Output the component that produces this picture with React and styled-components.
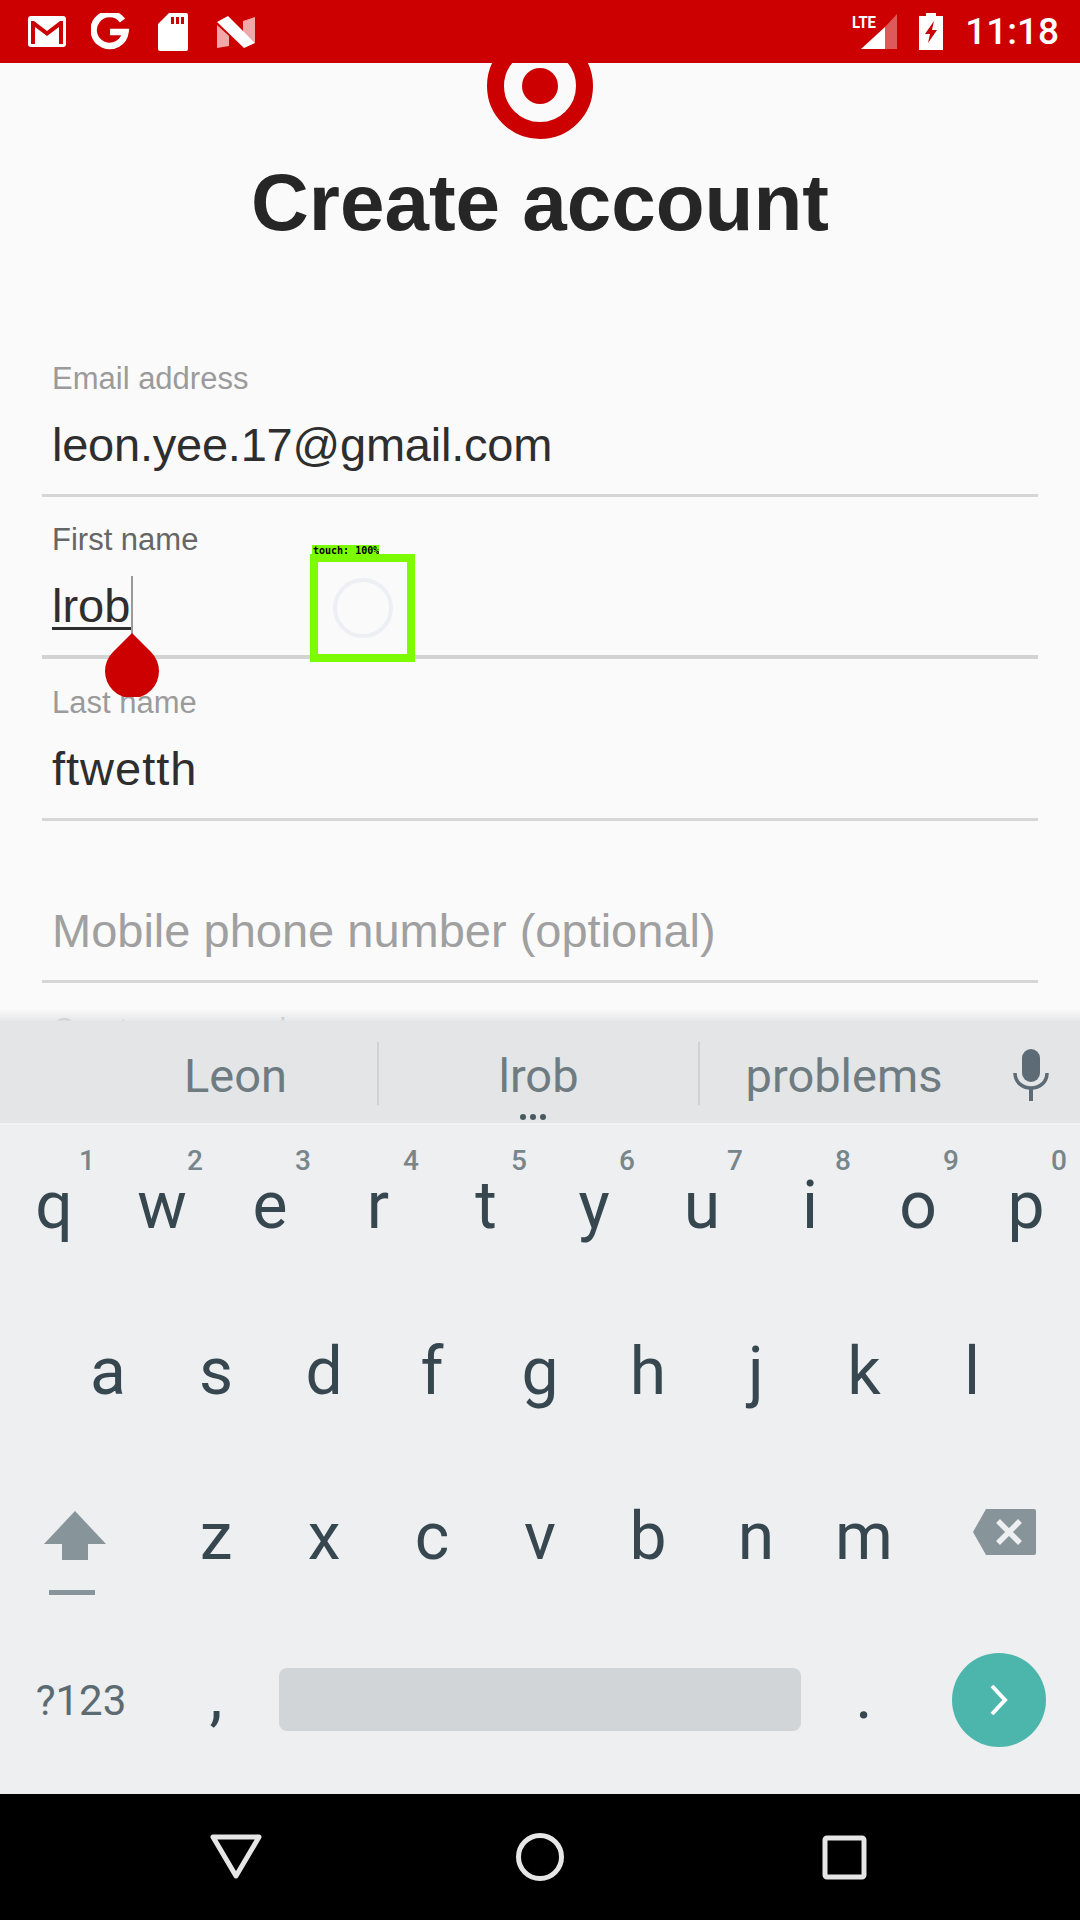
import React from "react";
import styled, { createGlobalStyle } from "styled-components";

const Global = createGlobalStyle`
  html, body { margin: 0; padding: 0; background: #fafafa; }
  #root { width: 1080px; height: 1920px; overflow: hidden; }
  * { box-sizing: border-box; }
`;
const Screen = styled.div`
  width: 1080px; height: 1920px; display: flex; flex-direction: column;
  font-family: "Liberation Sans", Arial, sans-serif;
`;
const StatusBar = styled.div`
  height: 63px; flex: none; background: #cc0000; display: flex; align-items: center;
  justify-content: space-between; padding: 0 21px 0 28px; position: relative; z-index: 2;
`;
const StatusGroup = styled.div`
  display: flex; align-items: center; gap: ${p => p.$gap || 25}px;
`;
const Clock = styled.span`
  font-family: Roboto, sans-serif; font-size: 37px; font-weight: 500; color: #fff;
`;
const Content = styled.div`
  height: 958px; flex: none; background: #fafafa; position: relative; overflow: hidden;
  display: flex; flex-direction: column; align-items: center;
  &::after {
    content: ""; position: absolute; left: 0; right: 0; bottom: 0; height: 12px;
    background: linear-gradient(to bottom, rgba(235,235,235,0), rgba(228,230,232,.9));
  }
`;
const Logo = styled.svg`
  width: 106px; height: 106px; margin-top: -30px; flex: none; display: block;
`;
const Title = styled.h1`
  margin: 20px 0 0; font-size: 80px; line-height: 88px; font-weight: 700; color: #262626;
`;
const Form = styled.div`
  width: 100%; padding: 0 42px; margin-top: 88px; display: flex; flex-direction: column;
`;
const Field = styled.div`
  height: 162px; flex: none; padding: 0 10px; border-bottom: ${p => p.$focus ? 4 : 3}px solid ${p => p.$focus ? "#d3d3d3" : "#d6d6d6"};
  display: flex; flex-direction: column; justify-content: flex-end;
`;
const Label = styled.div`
  font-size: 31px; line-height: 36px; color: ${p => p.$focus ? "#666" : "#9b9b9b"}; margin-bottom: ${p => p.$mb ?? 16}px;
`;
const Value = styled.div`
  font-size: 47px; line-height: 64px; color: #2e2e2e; height: 81px; display: flex; align-items: flex-start;
  letter-spacing: ${p => p.$track || 0}px;
`;
const Placeholder = styled(Value)`color: #a0a0a0;`;
const Composing = styled.span`
  border-bottom: 3px solid #2e2e2e; height: 56px; line-height: 64px; width: 80px; white-space: nowrap;
`;
const Cursor = styled.span`
  position: absolute; left: 131px; top: 513px; width: 2px; height: 60px; background: #9a9a9a;
`;
const Handle = styled.svg`
  position: absolute; left: 104px; top: 570px; width: 56px; height: 64px;
`;
const TouchBox = styled.div`
  position: absolute; left: 310px; top: 491px; width: 105px; height: 108px; border: 8px solid #7cfc00;
  display: flex; align-items: center; justify-content: center;
`;
const TouchTag = styled.div`
  position: absolute; left: -6px; top: -17px; height: 12px; width: 67px; background: #7cfc00;
  font-family: "DejaVu Sans Mono", monospace; font-size: 10px; line-height: 12px; font-weight: 700; color: #000; white-space: nowrap; padding-left: 1px; overflow: hidden;
`;
const TouchRing = styled.div`
  width: 60px; height: 60px; border-radius: 50%; border: 4px solid #eeeef5;
`;
const Keyboard = styled.div`
  height: 773px; flex: none; background: #edeff1; display: flex; flex-direction: column; font-family: Roboto, sans-serif;
`;
const Candidates = styled.div`
  height: 104px; flex: none; background: #e3e5e7; border-bottom: 2px solid #f0f2f3; position: relative; padding-top: 3px;
  display: grid; grid-template-columns: 379px 321px 288px 92px; align-items: center;
`;
const Candidate = styled.div`
  font-size: 47px; color: #6e7b81; text-align: center; padding-left: ${p => p.$pl || 0}px; height: 63px; line-height: 68px;
  border-right: ${p => p.$div ? "2px solid #cfd3d6" : "0"};
`;
const MicCell = styled.div`display: flex; justify-content: flex-start; padding-left: 25px; padding-top: 3px;`;
const Dots = styled.div`
  position: absolute; left: 520px; top: 93px; display: flex; gap: 4px;
`;
const Dot = styled.i`width: 6px; height: 6px; border-radius: 50%; background: #4a5960;`;
const KeyRow = styled.div`
  height: ${p => p.$h || 165}px; flex: none; display: grid; grid-template-columns: ${p => p.$cols};
  padding: ${p => p.$pad || "0"};
`;
const Key = styled.div`
  position: relative; display: flex; justify-content: center; align-items: flex-start;
  padding-top: ${p => p.$pt || 46}px; font-size: 66px; line-height: 70px; color: #37474f;
`;
const Hint = styled.span`
  position: absolute; left: 79px; top: 20px; font-size: 28px; line-height: 32px; font-weight: 500; color: #78868c;
`;
const SideKey = styled.div`
  display: flex; justify-content: ${p => p.$justify || "center"}; align-items: flex-start; padding: ${p => p.$pad || "0"};
  font-size: ${p => p.$fs || 42}px; line-height: 50px; color: #5c6b72;
`;
const Space = styled.div`
  height: 63px; margin: 47px 9px 0; border-radius: 8px; background: #d1d5d8;
`;
const Enter = styled.div`
  width: 94px; height: 94px; border-radius: 50%; background: #4db6ac; margin: 32px 0 0 34px;
  display: flex; align-items: center; justify-content: center;
`;
const NavBar = styled.div`
  height: 126px; flex: none; background: #000; display: grid; grid-template-columns: repeat(3, 1fr); padding: 0 84px; align-items: center; justify-items: center;
`;

const row1 = "qwertyuiop".split("");
const row2 = "asdfghjkl".split("");
const row3 = "zxcvbnm".split("");

function Gmail() {
  return <svg width="38" height="31" viewBox="0 0 38 31"><rect width="38" height="31" rx="3" fill="#fff"/><path d="M3 5v23h4V11l12 9 12-9v17h4V5h-3L19 15 6 5z" fill="#c00"/></svg>;
}
function GLogo() {
  return <svg width="42" height="38" viewBox="0 0 42 38"><path d="M31.5 7.5A16 16 0 1 0 34.5 19H19" fill="none" stroke="#fff" strokeWidth="6.5"/></svg>;
}
function Sd() {
  return <svg width="34" height="38" viewBox="0 0 34 38"><path d="M11 0h17a2 2 0 0 1 2 2v34a2 2 0 0 1-2 2H2a2 2 0 0 1-2-2V11z" fill="#fff"/><path d="M13 4h3v7h-3zM18 4h3v7h-3zM23 4h3v7h-3z" fill="#c00"/></svg>;
}
function NLogo() {
  return <svg width="38" height="32" viewBox="0 0 38 32"><path d="M0 9l12 11v10L0 32z" fill="#f0a8a8"/><path d="M38 1L26 5v11l12 11z" fill="#f0a8a8"/><path d="M0 6L11 0l27 27-11 5z" fill="#fff"/></svg>;
}
function Signal() {
  return <svg width="45" height="37" viewBox="0 0 45 37"><text x="0" y="15" fontFamily="Roboto" fontSize="17" fontWeight="700" fill="#fff" textLength="24" lengthAdjust="spacingAndGlyphs">LTE</text><path d="M9 36l24-22v22z" fill="#fff"/><path d="M33 14L45 1v35H33z" fill="#fff" opacity=".35"/></svg>;
}
function Battery() {
  return <svg width="24" height="37" viewBox="0 0 24 37"><path d="M7 0h10v3h7v34H0V3h7z" fill="#fff"/><path d="M15 8L6 21h5l-2 9 9-13h-5z" fill="#c00"/></svg>;
}
function Mic() {
  return <svg width="36" height="52" viewBox="0 0 36 52"><rect x="9" y="0" width="18" height="33" rx="9" fill="#5c6b76"/><path d="M2 24c0 9 7 15 16 15s16-6 16-15" fill="none" stroke="#5c6b76" strokeWidth="3.5"/><rect x="16" y="38" width="4" height="14" fill="#5c6b76"/></svg>;
}
function Shift() {
  return <svg width="64" height="84" viewBox="0 0 64 84"><path d="M32 0l31 33H45v16H19V33H1z" fill="#87949a"/><rect x="6" y="79" width="46" height="5" fill="#87949a"/></svg>;
}
function Backspace() {
  return <svg width="64" height="48" viewBox="0 0 64 48"><path d="M14 1h48a2 2 0 0 1 2 2v42a2 2 0 0 1-2 2H14L1 24z" fill="#87949a"/><path d="M26 13l22 22M48 13L26 35" stroke="#edeff1" strokeWidth="5.5" fill="none"/></svg>;
}

export default function App() {
  return (
    <Screen>
      <Global />
      <StatusBar>
        <StatusGroup $gap={25}><Gmail /><GLogo /><Sd /><NLogo /></StatusGroup>
        <StatusGroup $gap={22}><Signal /><Battery /><Clock>11:18</Clock></StatusGroup>
      </StatusBar>
      <Content>
        <Logo viewBox="0 0 106 106"><circle cx="53" cy="53" r="44.5" fill="none" stroke="#cc0000" strokeWidth="17"/><circle cx="53" cy="53" r="18" fill="#cc0000"/></Logo>
        <Title>Create account</Title>
        <Form>
          <Field><Label>Email address</Label><Value $track={-0.23}>leon.yee.17@gmail.com</Value></Field>
          <Field $focus><Label $focus>First name</Label><Value><Composing>lrob</Composing></Value></Field>
          <Field><Label>Last name</Label><Value $track={1}>ftwetth</Value></Field>
          <Field><Placeholder>Mobile phone number (optional)</Placeholder></Field>
          <Field><Label $mb={13}>Create password</Label><Value /></Field>
        </Form>
        <Cursor />
        <Handle viewBox="0 0 56 64"><path d="M28 0L47 19A27 27 0 1 1 9 19z" fill="#cc0000"/></Handle>
        <TouchBox><TouchTag>touch: 100%</TouchTag><TouchRing /></TouchBox>
      </Content>
      <Keyboard>
        <Candidates>
          <Candidate $div $pl={94}>Leon</Candidate>
          <Candidate $div>lrob</Candidate>
          <Candidate>problems</Candidate>
          <MicCell><Mic /></MicCell>
          <Dots><Dot /><Dot /><Dot /></Dots>
        </Candidates>
        <KeyRow $cols="repeat(10, 108px)" $h={166}>
          {row1.map((k, i) => <Key key={k}>{k}<Hint>{(i + 1) % 10}</Hint></Key>)}
        </KeyRow>
        <KeyRow $cols="repeat(9, 108px)" $pad="0 54px" $h={165}>
          {row2.map(k => <Key key={k}>{k}</Key>)}
        </KeyRow>
        <KeyRow $cols="162px repeat(7, 108px) 162px" $h={165}>
          <SideKey $justify="flex-start" $pad="55px 0 0 43px"><Shift /></SideKey>
          {row3.map(k => <Key key={k}>{k}</Key>)}
          <SideKey $justify="flex-start" $pad="52px 0 0 54px"><Backspace /></SideKey>
        </KeyRow>
        <KeyRow $cols="162px 108px 540px 108px 162px" $h={173}>
          <SideKey $pad="55px 0 0 0">?123</SideKey>
          <Key $pt={40}>,</Key>
          <Space />
          <Key $pt={40}>.</Key>
          <SideKey $justify="flex-start"><Enter><svg width="22" height="34" viewBox="0 0 22 34"><path d="M4 3l13 14L4 31" fill="none" stroke="#fff" strokeWidth="4"/></svg></Enter></SideKey>
        </KeyRow>
      </Keyboard>
      <NavBar>
        <svg width="52" height="46" viewBox="0 0 52 46"><path d="M3 3h46L26 42z" fill="none" stroke="#e6e6e6" strokeWidth="5" strokeLinejoin="round"/></svg>
        <svg width="50" height="50" viewBox="0 0 50 50"><circle cx="25" cy="25" r="21.5" fill="none" stroke="#e6e6e6" strokeWidth="5"/></svg>
        <svg width="45" height="45" viewBox="0 0 45 45"><rect x="3" y="3" width="39" height="39" rx="2" fill="none" stroke="#e6e6e6" strokeWidth="5"/></svg>
      </NavBar>
    </Screen>
  );
}
